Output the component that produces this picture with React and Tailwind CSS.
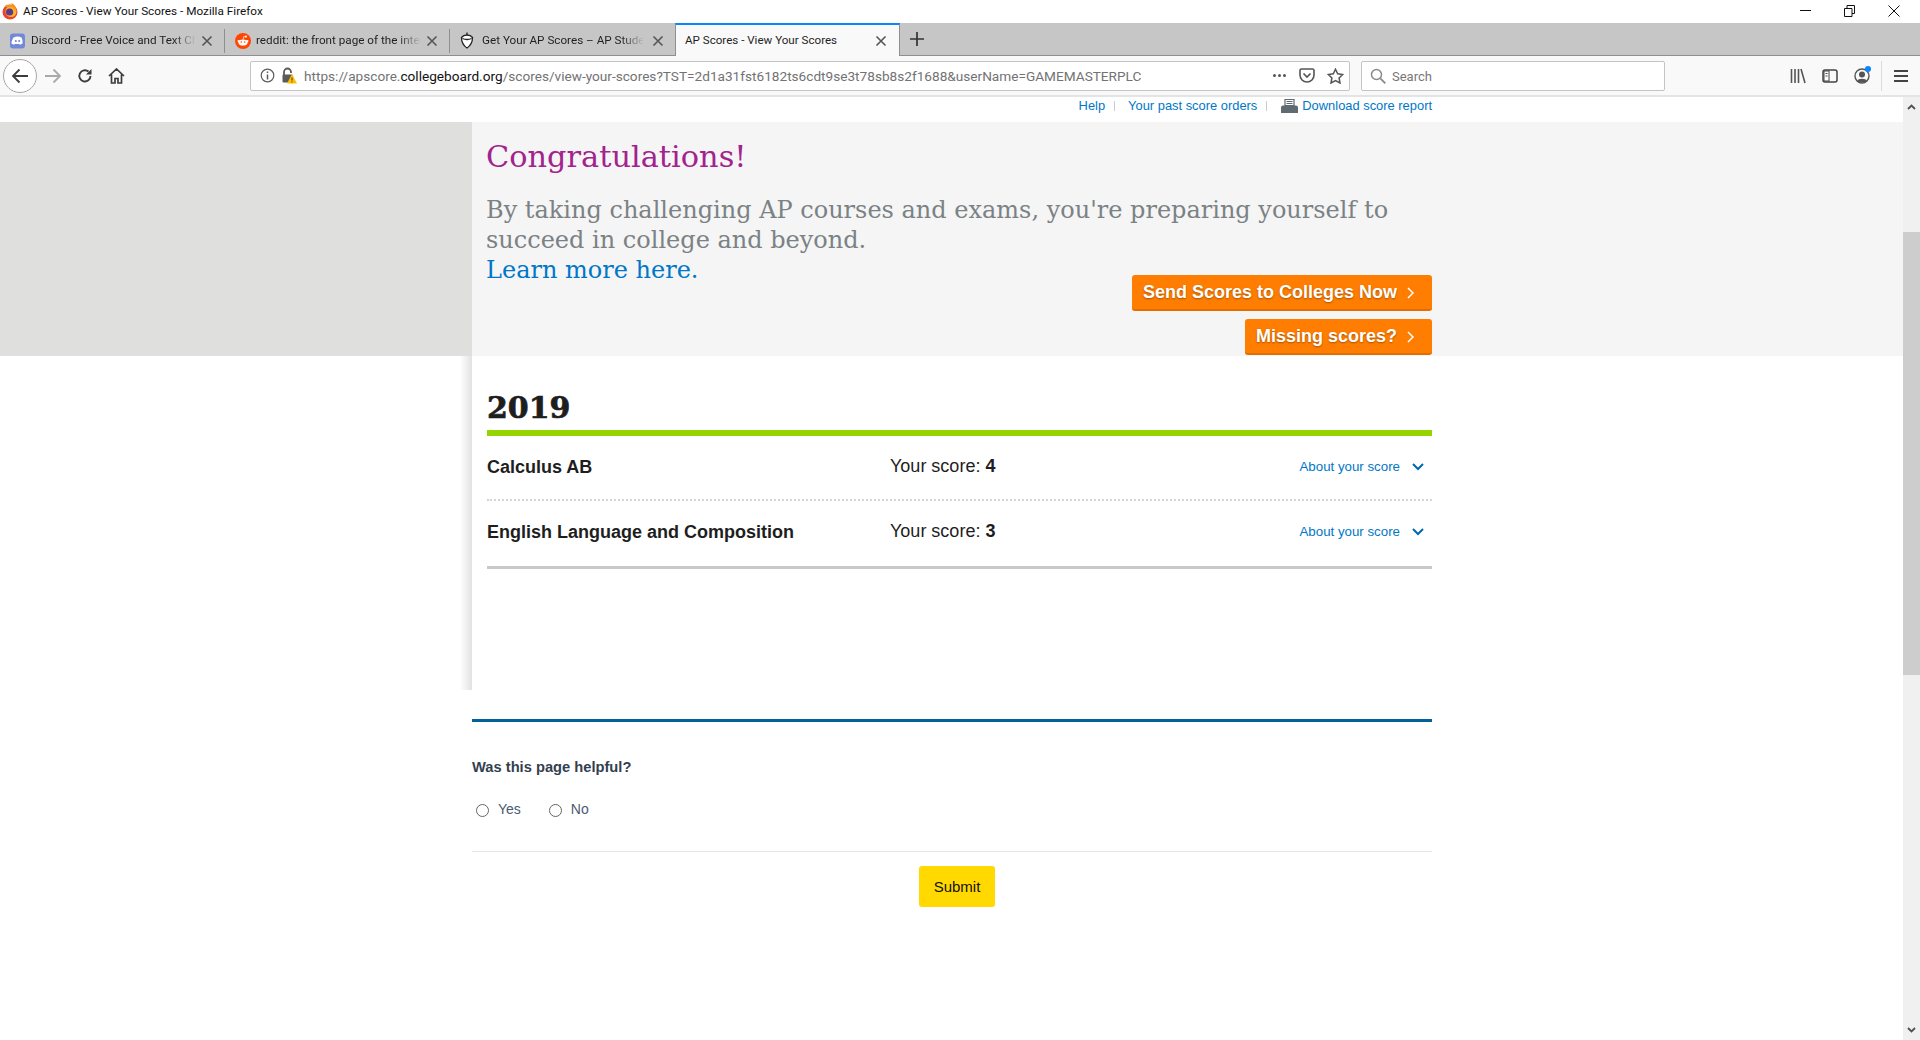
import React from 'react';

const UI = "font-['Roboto',sans-serif]";
const ARIAL = "font-['Liberation_Sans',Arial,sans-serif]";
const SLAB = "font-['DejaVu_Serif',serif]";

const CloseX = ({ color = '#555' }) => (
  <svg width="12" height="12" viewBox="0 0 12 12" className="shrink-0">
    <path d="M1.500 1.500l9 9M10.500 1.500l-9 9" stroke={color} strokeWidth="1.600" fill="none" />
  </svg>
);

const FirefoxLogo = () => (
  <svg width="16" height="17" viewBox="0 0 16 17" className="shrink-0">
    <circle cx="8" cy="9" r="7.500" fill="#e8442e" />
    <circle cx="9" cy="8.500" r="5.500" fill="#ffb12a" />
    <circle cx="7.600" cy="9" r="3.600" fill="#5a3a8e" />
    <path d="M3 3c1 2 3 1 5 1 3 0 5 2 6 5 1-4-1-8-5-9 1 1 1 2 0 2C7 2 4 1 3 3z" fill="#f7941e" />
  </svg>
);

const DiscordIcon = () => (
  <svg width="16" height="16" viewBox="0 0 16 16" className="shrink-0">
    <rect width="15" height="15" y="0.500" rx="3" fill="#7289da" />
    <path d="M3.500 4.500c3-1.400 5-1.400 8 0 .9 2 1.200 4 1 6-1 .8-2 1.100-2.800 1.200l-.6-1c-1.400.4-2.800.4-4.200 0l-.6 1C3.500 11.600 2.500 11.300 1.500 10.500c-.2-2 .9-4 2-6z" fill="#fff" />
    <circle cx="5.800" cy="8" r="1.100" fill="#7289da" />
    <circle cx="9.200" cy="8" r="1.100" fill="#7289da" />
  </svg>
);

const RedditIcon = () => (
  <svg width="16" height="16" viewBox="0 0 16 16" className="shrink-0">
    <circle cx="8" cy="8" r="8" fill="#ff4500" />
    <ellipse cx="8" cy="9.500" rx="4.600" ry="3.100" fill="#fff" />
    <circle cx="3.600" cy="8" r="1.100" fill="#fff" />
    <circle cx="12.400" cy="8" r="1.100" fill="#fff" />
    <circle cx="11" cy="3.500" r="1" fill="#fff" />
    <path d="M8 6.500l.8-3 2.200.5" stroke="#fff" strokeWidth=".7" fill="none" />
    <circle cx="6.300" cy="9" r=".8" fill="#ff4500" />
    <circle cx="9.700" cy="9" r=".8" fill="#ff4500" />
  </svg>
);

const AcornIcon = () => (
  <svg width="14" height="17" viewBox="0 0 14 17" className="shrink-0">
    <path d="M1.500 5.500C3 3.500 5 3 7 3s4 .5 5.500 2.500C12.500 10 10 14 7 16 4 14 1.500 10 1.500 5.500z" fill="#fff" stroke="#222" strokeWidth="1.300" />
    <path d="M7 3V.5M2.500 6.500c3 1.300 6 1.300 9 0" stroke="#222" strokeWidth="1.300" fill="none" />
  </svg>
);

const Tab = ({ icon, title }) => (
  <div className="mt-[3px] flex h-[24px] w-[225px] items-center gap-[5px] border-r border-[#8f8f8f] pl-[10px] pr-[11px]">
    {icon}
    <span className="flex-1 overflow-hidden whitespace-nowrap text-[11.700px] text-[#1f1f1f] [mask-image:linear-gradient(to_right,black_86%,transparent)]">
      {title}
    </span>
    <CloseX />
  </div>
);

const TabStrip = () => (
  <div className={`${UI} flex h-[33px] items-center border-b border-[#8f8f8f] bg-[#c6c6c6]`}>
    <Tab icon={<DiscordIcon />} title="Discord - Free Voice and Text Chat" />
    <Tab icon={<RedditIcon />} title="reddit: the front page of the internet" />
    <div className="mt-[3px] flex h-[24px] w-[225px] items-center gap-[8px] pl-[10px] pr-[11px]">
      <AcornIcon />
      <span className="flex-1 overflow-hidden whitespace-nowrap text-[11.700px] text-[#1f1f1f] [mask-image:linear-gradient(to_right,black_86%,transparent)]">
        Get Your AP Scores – AP Students
      </span>
      <CloseX />
    </div>
    <div className="flex h-[33px] w-[225px] items-center justify-between border-x border-[#8f8f8f] border-t-[2px] border-t-[#0a84ff] bg-[#f9f9f9] pl-[9px] pr-[12px] pt-[2px]">
      <span className="whitespace-nowrap text-[11.600px] text-[#1f1f1f]">AP Scores - View Your Scores</span>
      <CloseX />
    </div>
    <svg width="14" height="14" viewBox="0 0 14 14" className="ml-[10px]">
      <path d="M7 0v14M0 7h14" stroke="#333" strokeWidth="1.700" />
    </svg>
  </div>
);

const Toolbar = () => (
  <div className={`${UI} flex h-[41px] items-center border-b-2 border-[#e4e4e4] bg-[#f9f9f9]`}>
    <div className="ml-[3px] flex h-[34px] w-[34px] items-center justify-center rounded-full border border-[#a8a8a8] bg-white">
      <svg width="18" height="16" viewBox="0 0 18 16">
        <path d="M17 8H2M8.500 1.500L2 8l6.500 6.500" stroke="#3c3c3c" strokeWidth="1.800" fill="none" />
      </svg>
    </div>
    <svg width="18" height="16" viewBox="0 0 18 16" className="ml-[7px]">
      <path d="M1 8h15M9.500 1.500L16 8l-6.500 6.500" stroke="#a9a9a9" strokeWidth="1.800" fill="none" />
    </svg>
    <svg width="16" height="16" viewBox="0 0 16 16" className="ml-[15px]">
      <path d="M13.500 8A5.600 5.600 0 1 1 11.500 3.600" stroke="#3c3c3c" strokeWidth="1.900" fill="none" />
      <path d="M14.500 1v5.500H9z" fill="#3c3c3c" />
    </svg>
    <svg width="17" height="16" viewBox="0 0 17 16" className="ml-[15px]">
      <path d="M1 8l7.500-7L16 8M3.500 6.500V15h3.500v-4.500h3V15h3.500V6.500" stroke="#3c3c3c" strokeWidth="1.700" fill="none" />
    </svg>

    <div className="ml-[125px] flex h-[30px] w-[1100px] items-center rounded-[2px] border border-[#c4c4c4] bg-white pl-[9px] pr-[5px]">
      <svg width="15" height="15" viewBox="0 0 15 15" className="shrink-0">
        <circle cx="7.500" cy="7.500" r="6.300" stroke="#5b5b5b" strokeWidth="1.200" fill="none" />
        <path d="M7.500 6.500v5M7.500 3.500v1.600" stroke="#5b5b5b" strokeWidth="1.500" />
      </svg>
      <svg width="16" height="17" viewBox="0 0 16 17" className="ml-[6px] shrink-0">
        <path d="M3 8V5a3.500 3.500 0 0 1 7 0v1" stroke="#5b5b5b" strokeWidth="1.800" fill="none" />
        <rect x="1.500" y="7.500" width="10" height="8" rx="1" fill="#5b5b5b" />
        <path d="M11 7l5 9.500H6z" fill="#ffbf00" />
        <path d="M11 10.500v3M11 14.500v1" stroke="#333" strokeWidth="1" />
      </svg>
      <span className="ml-[7px] flex-1 whitespace-nowrap pt-px text-[13.640px] text-[#737373]">
        https://apscore.<span className="text-[#111]">collegeboard.org</span>/scores/view-your-scores?TST=2d1a31fst6182ts6cdt9se3t78sb8s2f1688&userName=GAMEMASTERPLC
      </span>
      <div className="flex items-center gap-[2px]">
        <span className="h-[3px] w-[3px] rounded-full bg-[#555]" />
        <span className="h-[3px] w-[3px] rounded-full bg-[#555]" />
        <span className="h-[3px] w-[3px] rounded-full bg-[#555]" />
      </div>
      <svg width="16" height="15" viewBox="0 0 16 15" className="ml-[13px]">
        <path d="M1 2.500C1 1.500 1.600 1 2.500 1h11c.9 0 1.500.5 1.500 1.500v4.500A7 7 0 0 1 1 7z" stroke="#555" strokeWidth="1.600" fill="none" />
        <path d="M4.500 5.500L8 9l3.500-3.500" stroke="#555" strokeWidth="1.700" fill="none" />
      </svg>
      <svg width="17" height="16" viewBox="0 0 17 16" className="ml-[12px]">
        <path d="M8.500 1.200l2.200 4.600 5 .7-3.600 3.500.9 5-4.500-2.400L4 15l.9-5L1.300 6.500l5-.7z" stroke="#555" strokeWidth="1.500" fill="none" />
      </svg>
    </div>

    <div className="ml-[11px] flex h-[30px] w-[304px] items-center rounded-[2px] border border-[#c4c4c4] bg-white pl-[8px]">
      <svg width="16" height="16" viewBox="0 0 16 16">
        <circle cx="6.500" cy="6.500" r="5" stroke="#8a8a8a" strokeWidth="1.500" fill="none" />
        <path d="M10.300 10.300l5 5" stroke="#8a8a8a" strokeWidth="1.800" />
      </svg>
      <span className="ml-[6px] pt-[2px] text-[13px] text-[#777]">Search</span>
    </div>

    <svg width="16" height="16" viewBox="0 0 16 16" className="ml-[125px]">
      <path d="M1.500 1v14M5 1v14M8.500 1v14M11 1l4 14" stroke="#555" strokeWidth="1.600" fill="none" />
    </svg>
    <svg width="16" height="16" viewBox="0 0 16 16" className="ml-[16px]">
      <rect x="1" y="2" width="14" height="12" rx="2" stroke="#444" strokeWidth="1.500" fill="none" />
      <rect x="2" y="3" width="5" height="10" fill="#fff" stroke="#444" strokeWidth="1" />
      <path d="M3.500 5.500h2M3.500 8h2" stroke="#444" />
    </svg>
    <div className="relative ml-[16px] h-[16px] w-[16px]">
      <svg width="16" height="16" viewBox="0 0 16 16">
        <circle cx="8" cy="8" r="7" stroke="#555" strokeWidth="1.400" fill="none" />
        <circle cx="8" cy="6.500" r="3" fill="#555" />
        <path d="M3 13c1-3 9-3 10 0-2 2-8 2-10 0z" fill="#555" />
      </svg>
      <span className="absolute right-[-1px] top-[-2px] h-[6px] w-[6px] rounded-full bg-[#0a84ff]" />
    </div>
    <span className="ml-[11px] h-[30px] w-px bg-[#dcdcdc]" />
    <div className="ml-[12px] flex w-[14px] flex-col gap-[3px]">
      <span className="h-[2px] bg-[#444]" />
      <span className="h-[2px] bg-[#444]" />
      <span className="h-[2px] bg-[#444]" />
    </div>
  </div>
);

const Printer = () => (
  <svg width="17" height="14" viewBox="0 0 17 14" className="block">
    <path d="M4 .5h9v6H4z" fill="#fff" stroke="#5f6b70" strokeWidth="1.200" />
    <path d="M5.500 2.500h6M5.500 4.500h6" stroke="#5f6b70" />
    <path d="M2 6.500h13a2 2 0 0 1 2 2V14H0V8.500a2 2 0 0 1 2-2z" fill="#5f6b70" />
  </svg>
);

const TopLinks = () => (
  <div className={`${ARIAL} flex h-[25px] items-center justify-end pb-[7px] pr-[471px] text-[12.900px] text-[#0077c8]`}>
    <span>Help</span>
    <span className="mx-[9px] h-[10px] w-px bg-[#ccc]" />
    <span className="ml-[4px]">Your past score orders</span>
    <span className="mx-[9px] h-[10px] w-px bg-[#ccc]" />
    <span className="ml-[5px] mr-[4px]"><Printer /></span>
    <span>Download score report</span>
  </div>
);

const OrangeButton = ({ children }) => (
  <div className={`${ARIAL} flex h-[36px] items-center gap-[10px] rounded-[3px] border-b-2 border-[#df6f00] bg-[#ff7d00] pl-[11px] pr-[18px] pt-px text-[18px] font-bold text-white [text-shadow:0_1px_2px_rgba(0,0,0,0.35)]`}>
    <span>{children}</span>
    <svg width="7" height="12" viewBox="0 0 7 12">
      <path d="M1 1l5 5-5 5" stroke="#fff" strokeWidth="1.500" fill="none" />
    </svg>
  </div>
);

const Hero = () => (
  <div className="flex h-[234px] bg-[#f5f5f5]">
    <div className="w-[472px] bg-[#dfdfdd]" />
    <div className="w-[960px] pl-[14px] pt-[15px]">
      <h1 className={`${SLAB} text-[30.400px] leading-[40px] text-[#a3238e]`}>Congratulations!</h1>
      <p className={`${SLAB} mt-[18px] text-[24px] leading-[30px] text-[#7b8285]`}>
        By taking challenging AP courses and exams, you're preparing yourself to
        <br />
        succeed in college and beyond.
        <br />
        <span className="text-[#0077c8]">Learn more here.</span>
      </p>
      <div className="mt-[-10px] flex flex-col items-end gap-[8px]">
        <OrangeButton>Send Scores to Colleges Now</OrangeButton>
        <OrangeButton>Missing scores?</OrangeButton>
      </div>
    </div>
  </div>
);

const ScoreRow = ({ name, score, className }) => (
  <div className={`flex items-center ${className}`}>
    <span className="w-[403px] text-[18px] font-bold text-[#1e1e1e]">{name}</span>
    <span className="mb-[3px] flex-1 text-[18px] text-[#1e1e1e]">
      Your score: <b>{score}</b>
    </span>
    <span className="mb-[2px] text-[13.300px] text-[#0077c8]">About your score</span>
    <svg width="12" height="8" viewBox="0 0 12 8" className="mb-[2px] ml-[12px] mr-[8px]">
      <path d="M1 1l5 5 5-5" stroke="#0068b0" strokeWidth="2" fill="none" />
    </svg>
  </div>
);

const Results = () => (
  <div className={`${ARIAL} h-[334px] pl-[15px]`}>
    <h2 className={`${SLAB} pt-[29px] text-[30px] font-bold leading-[45px] text-[#1e1e1e] [-webkit-text-stroke:0.7px_#1e1e1e]`}>2019</h2>
    <div className="h-[6px] bg-[#94d500]" />
    <ScoreRow name="Calculus AB" score="4" className="h-[65px] border-b-2 border-dotted border-[#d4d4d4]" />
    <ScoreRow name="English Language and Composition" score="3" className="h-[68px] border-b-[3px] border-[#c8c8c8] pb-[2px]" />
  </div>
);

const Feedback = () => (
  <div className={`${ARIAL}`}>
    <div className="mt-[29px] h-[3px] bg-[#006298]" />
    <p className="mt-[36px] text-[14.700px] font-bold leading-[18px] text-[#333f50]">Was this page helpful?</p>
    <div className="mt-[24px] flex h-[20px] items-center pl-[4px] text-[14px] text-[#4a5a70]">
      <span className="h-[13px] w-[13px] rounded-full border border-[#666]" />
      <span className="mb-[1px] ml-[9px]">Yes</span>
      <span className="ml-[28px] h-[13px] w-[13px] rounded-full border border-[#666]" />
      <span className="mb-[1px] ml-[9px]">No</span>
    </div>
    <div className="mt-[31px] h-px bg-[#e6e6e6]" />
    <div className="ml-[447px] mt-[14px] flex h-[41px] w-[76px] items-center justify-center rounded-[3px] bg-[#ffd900] pt-px text-[15px] text-[#111]">
      Submit
    </div>
  </div>
);

const Scrollbar = () => (
  <div className="flex h-full w-[17px] flex-col items-center bg-[#f0f0f0]">
    <svg width="9" height="6" viewBox="0 0 9 6" className="mt-[7px]">
      <path d="M1 5l3.500-3.500L8 5" stroke="#505050" strokeWidth="1.800" fill="none" />
    </svg>
    <div className="mt-[122px] h-[443px] w-full bg-[#cdcdcd]" />
    <svg width="9" height="6" viewBox="0 0 9 6" className="mb-[7px] mt-auto">
      <path d="M1 1l3.500 3.500L8 1" stroke="#505050" strokeWidth="1.800" fill="none" />
    </svg>
  </div>
);

const WindowButtons = () => (
  <div className="flex items-center gap-[33px] pb-[2px] pr-[20px]">
    <svg width="11" height="11" viewBox="0 0 11 11"><path d="M0 5.500h11" stroke="#111" /></svg>
    <svg width="11" height="12" viewBox="0 0 11 12">
      <path d="M.5 3.500h7.500v8H.5zM3 3.500V.5h7.500v8H8" stroke="#111" fill="none" />
    </svg>
    <svg width="12" height="12" viewBox="0 0 12 12"><path d="M.5.500l11 11M11.500.500l-11 11" stroke="#111" /></svg>
  </div>
);

const App = () => (
  <div className="flex h-screen flex-col overflow-hidden bg-white">
    <div className={`${UI} flex h-[23px] items-center justify-between bg-white pl-[2px]`}>
      <div className="flex items-center gap-[5px] text-[11.750px] text-[#111]">
        <FirefoxLogo />
        <span>AP Scores - View Your Scores - Mozilla Firefox</span>
      </div>
      <WindowButtons />
    </div>
    <TabStrip />
    <Toolbar />
    <div className="flex min-h-0 flex-1">
      <main className="min-w-0 flex-1">
        <TopLinks />
        <Hero />
        <div className="flex">
          <div className="flex w-[472px] justify-end">
            <div className="h-[334px] w-[12px] bg-gradient-to-r from-white to-[#e2e2e2]" />
          </div>
          <div className="w-[960px]">
            <Results />
            <Feedback />
          </div>
        </div>
      </main>
      <Scrollbar />
    </div>
  </div>
);

export default App;
